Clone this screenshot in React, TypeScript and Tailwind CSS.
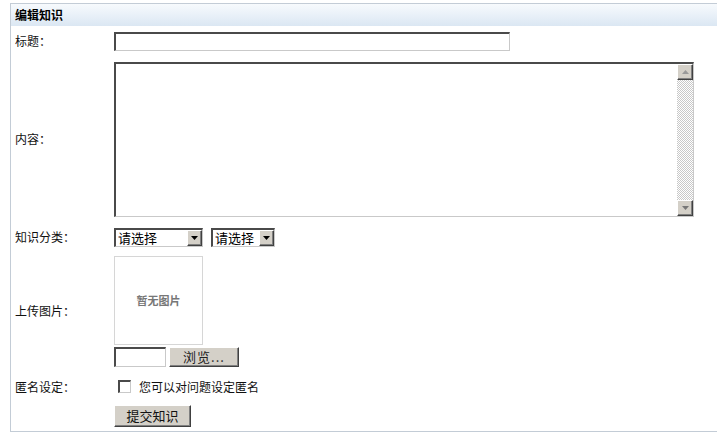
import { ReactNode } from "react";

const inset =
  "border-t-2 border-l-2 border-r border-b border-t-[#4a4a4a] border-l-[#4a4a4a] border-r-[#c9c9c9] border-b-[#c9c9c9] bg-white";
const raised =
  "border border-t-white border-l-white border-r-[#404040] border-b-[#404040] bg-[#d4d0c8] shadow-[inset_-1px_-1px_0_#808080]";

function Row({ label, className, children }: { label: string; className: string; children: ReactNode }) {
  return (
    <div className={`flex items-center ${className}`}>
      <div className="w-[103px] shrink-0 pl-[4px] text-[12px] text-[#111]">{label}</div>
      <div className="flex-1">{children}</div>
    </div>
  );
}

function ArrowBtn({ dir }: { dir: "up" | "down" }) {
  return (
    <div className={`flex h-[16px] w-[16px] items-center justify-center ${raised}`}>
      <svg width="7" height="4" viewBox="0 0 7 4">
        {dir === "down" ? (
          <path d="M0 0h7L3.5 4z" fill="#777" />
        ) : (
          <path d="M0 4h7L3.5 0z" fill="#999" />
        )}
      </svg>
    </div>
  );
}

function FakeSelect({ width }: { width: string }) {
  return (
    <div className={`flex h-[19px] items-center ${width} ${inset}`}>
      <span className="flex-1 pl-[2px] text-[13px] leading-none text-black">请选择</span>
      <div className={`flex h-[16px] w-[15px] items-center justify-center ${raised}`}>
        <svg width="7" height="4" viewBox="0 0 7 4">
          <path d="M0 0h7L3.5 4z" fill="#000" />
        </svg>
      </div>
    </div>
  );
}

export default function App() {
  return (
    <div
      className="h-[441px] w-[717px] overflow-hidden bg-white pl-[10px] pt-[3px]"
      style={{ fontFamily: '"Noto Sans CJK SC", "Liberation Sans", sans-serif' }}
    >
      <div className="border-b border-l border-t border-[#c3ccd6]">
        <div className="h-[22px] bg-gradient-to-b from-[#f7fafd] to-[#dbe7f3] pl-[4px] text-[12px] font-bold leading-[22px] text-black">
          编辑知识
        </div>

        <Row label="标题：" className="h-[30px]">
          <div className={`h-[19px] w-[396px] ${inset}`} />
        </Row>

        <Row label="内容：" className="h-[166px]">
          <div className={`flex h-[155px] w-[580px] ${inset}`}>
            <div className="flex-1" />
            <div className="flex w-[16px] flex-col bg-[repeating-conic-gradient(#c8c8c8_0%_25%,#ffffff_0%_50%)] bg-[length:2px_2px]">
              <ArrowBtn dir="up" />
              <div className="flex-1" />
              <ArrowBtn dir="down" />
            </div>
          </div>
        </Row>

        <Row label="知识分类：" className="h-[30px]">
          <div className="flex items-center gap-[8px]">
            <FakeSelect width="w-[89px]" />
            <FakeSelect width="w-[64px]" />
          </div>
        </Row>

        <Row label="上传图片：" className="h-[118px]">
          <div className="flex flex-col gap-[2px]">
            <div className="flex h-[89px] w-[89px] items-center justify-center border border-[#d6d6d6] text-[11px] font-bold text-[#777]">
              暂无图片
            </div>
            <div className="flex items-center gap-[3px]">
              <div className={`h-[20px] w-[52px] ${inset}`} />
              <div className={`flex h-[20px] w-[70px] items-center justify-center text-[13px] tracking-[1px] text-[#222] ${raised}`}>
                浏览...
              </div>
            </div>
          </div>
        </Row>

        <Row label="匿名设定：" className="h-[33px]">
          <div className="flex items-center">
            <div className={`ml-[4px] h-[13px] w-[13px] ${inset}`} />
            <span className="ml-[8px] text-[12px] text-[#111]">您可以对问题设定匿名</span>
          </div>
        </Row>

        <div className="flex pb-[4px] pl-[103px] pt-[2px]">
          <div className={`flex h-[22px] w-[77px] items-center justify-center text-[13px] text-[#111] ${raised}`}>
            提交知识
          </div>
        </div>
      </div>
    </div>
  );
}
